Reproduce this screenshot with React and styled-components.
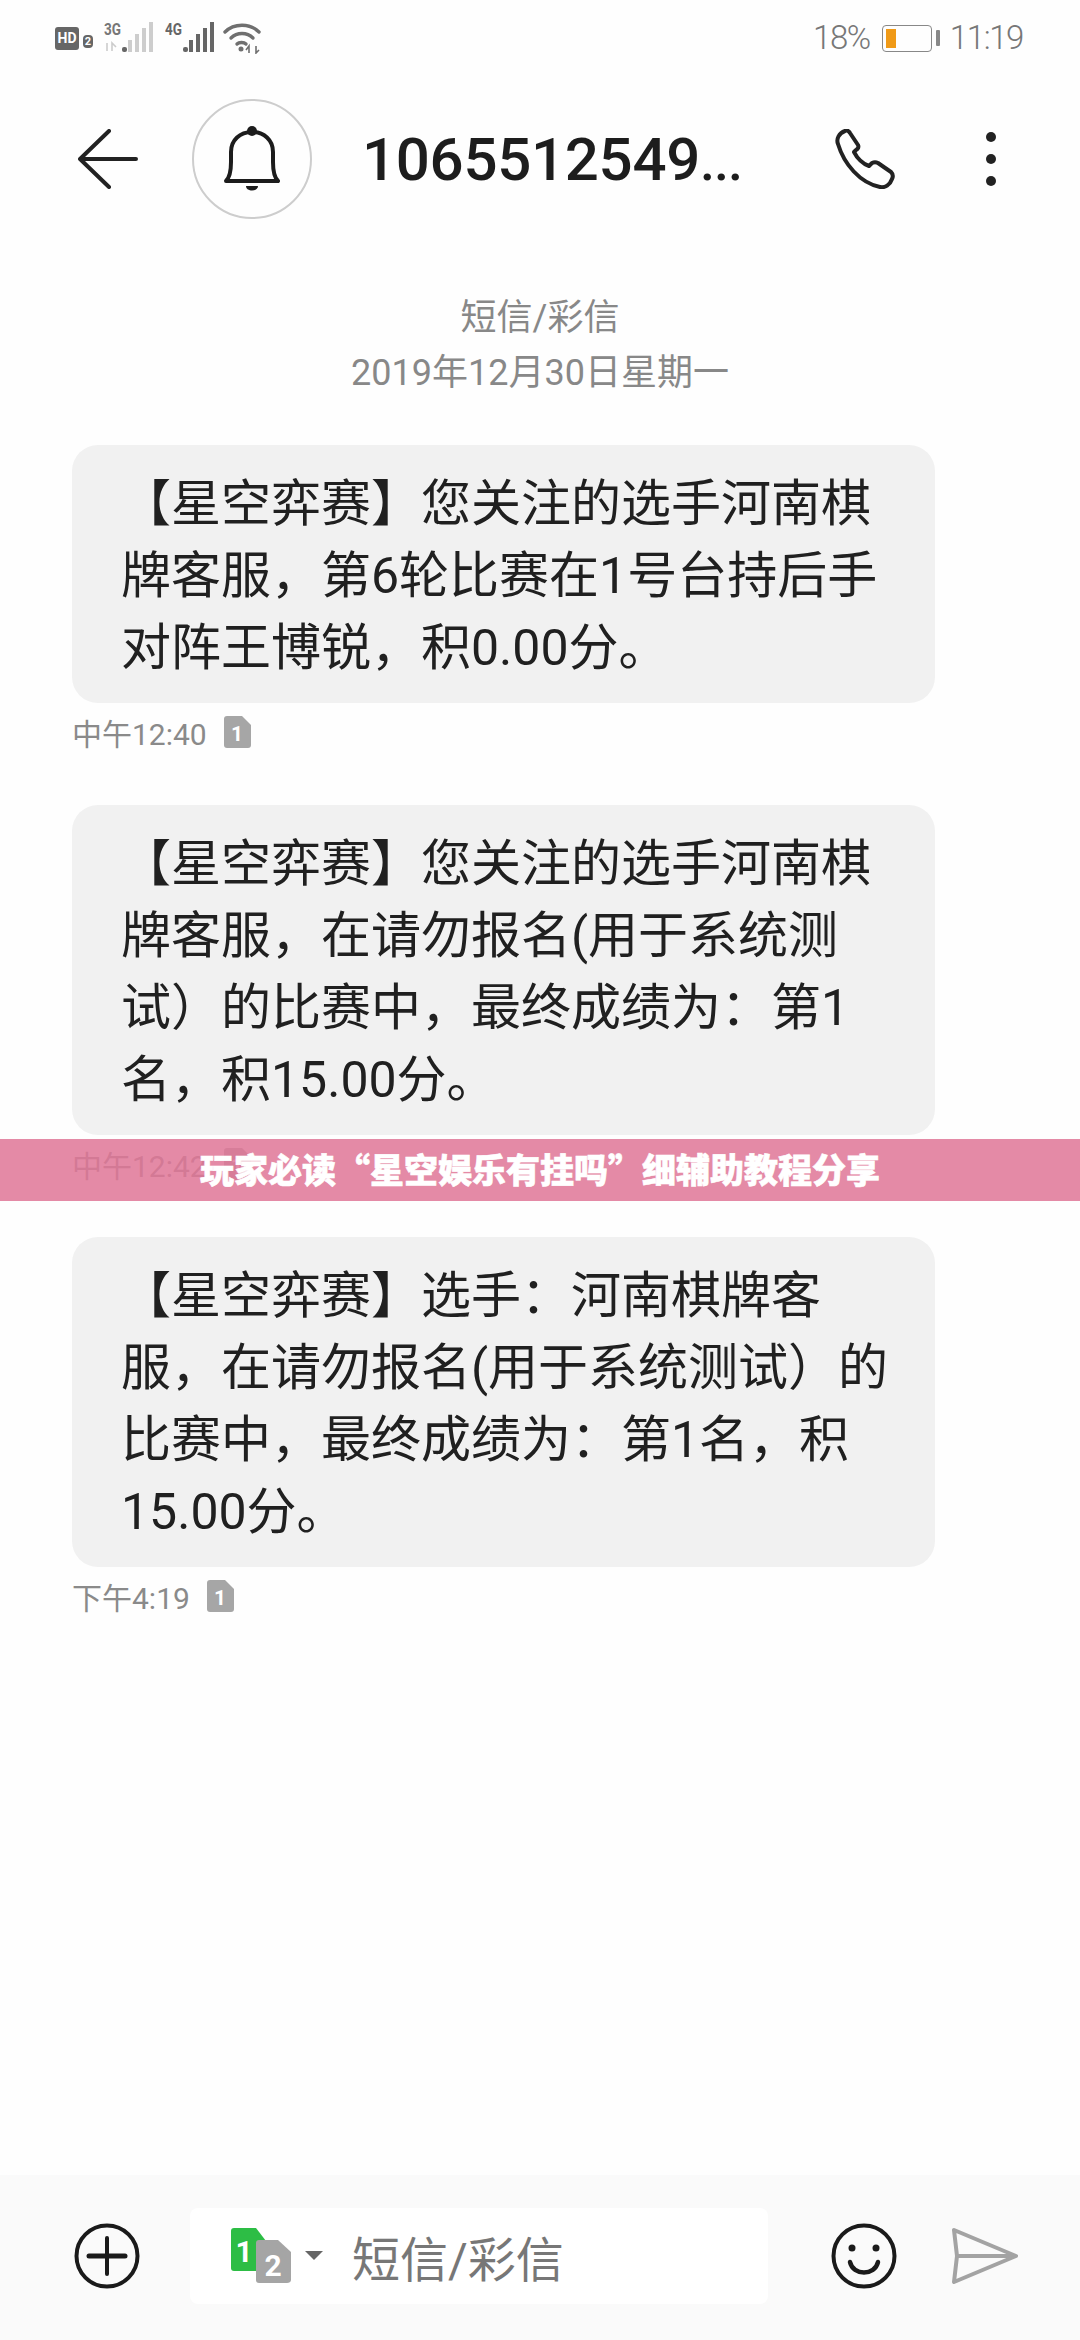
import React from "react";
import styled, { createGlobalStyle } from "styled-components";

const messages = [
  {
    lines: [
      "【星空弈赛】您关注的选手河南棋",
      "牌客服，第6轮比赛在1号台持后手",
      "对阵王博锐，积0.00分。",
    ],
    time: "中午12:40",
  },
  {
    lines: [
      "【星空弈赛】您关注的选手河南棋",
      "牌客服，在请勿报名(用于系统测",
      "试）的比赛中，最终成绩为：第1",
      "名，积15.00分。",
    ],
    time: "中午12:42",
  },
  {
    lines: [
      "【星空弈赛】选手：河南棋牌客",
      "服，在请勿报名(用于系统测试）的",
      "比赛中，最终成绩为：第1名，积",
      "15.00分。",
    ],
    time: "下午4:19",
  },
];

const Signal = ({ label, color, faint }) => (
  <svg width="50" height="38" viewBox="0 0 50 38">
    <text x="0" y="16" fontFamily="Roboto" fontWeight="700" fontSize="17" fill={faint ? "#777" : "#666"} textLength="17" lengthAdjust="spacingAndGlyphs">
      {label}
    </text>
    {faint && <path d="M3 24v8M8 32v-8l4 4" stroke="#ccc" strokeWidth="1.6" fill="none" />}
    <rect x="18" y="28" width="5" height="5" rx="2" fill="#666" />
    <rect x="24" y="21" width="4" height="12" fill={color} />
    <rect x="31" y="15" width="4" height="18" fill={color} />
    <rect x="38" y="9" width="4" height="24" fill={color} />
    <rect x="45" y="3" width="4" height="30" fill={color} />
  </svg>
);

const Wifi = () => (
  <svg width="38" height="32" viewBox="0 0 38 32" fill="none" stroke="#6f6f6f" strokeWidth="3.4" strokeLinecap="round">
    <path d="M2 10C11 1 27 1 36 10" />
    <path d="M8 16C14 10 24 10 30 16" />
    <path d="M14 22C16 20 21 20 23 22" />
    <circle cx="18" cy="27" r="2.5" fill="#6f6f6f" stroke="none" />
    <path d="M26 31v-7l-3 4M33 24v7l3-3" strokeWidth="1.6" strokeLinecap="butt" />
  </svg>
);

const BackIcon = () => (
  <svg width="60" height="60" viewBox="0 0 60 60" fill="none" stroke="#222" strokeWidth="4" strokeLinecap="round" strokeLinejoin="round">
    <path d="M31 2L2 30L31 58M2 30H58" />
  </svg>
);

const BellIcon = () => (
  <svg width="56" height="66" viewBox="0 0 56 66">
    <path
      d="M2 55C6 51 7 44 7 36V26C7 14 16 6 28 6C40 6 49 14 49 26V36C49 44 50 51 54 55Z"
      fill="none"
      stroke="#1c1c1c"
      strokeWidth="4"
      strokeLinejoin="round"
    />
    <circle cx="28" cy="5" r="5" fill="#1c1c1c" />
    <path d="M22 60H34C34 66 22 66 22 60Z" fill="#1c1c1c" />
  </svg>
);

const PhoneIcon = () => (
  <svg width="60" height="60" viewBox="0 0 60 60" fill="none" stroke="#222" strokeWidth="4" strokeLinejoin="round">
    <path d="M3 15C1 10 4 4 10 2C12 1 14 2 15 4L23 16C24 18 23 20 21 21L19 23C22 29 28 35 34 37L37 34C39 33 41 33 43 34L56 43C58 45 58 48 57 50C55 56 50 59 45 58C25 54 9 35 3 15Z" />
  </svg>
);

const PlusIcon = () => (
  <svg width="66" height="66" viewBox="0 0 66 66" fill="none" stroke="#1a1a1a" strokeWidth="4" strokeLinecap="round">
    <circle cx="33" cy="33" r="30.5" />
    <path d="M15 33H51" strokeWidth="5" />
    <path d="M33 15V51" />
  </svg>
);

const SmileIcon = () => (
  <svg width="66" height="66" viewBox="0 0 66 66" fill="none" stroke="#1a1a1a" strokeWidth="4" strokeLinecap="round">
    <circle cx="33" cy="33" r="30.5" />
    <circle cx="21" cy="25" r="3.5" fill="#1a1a1a" stroke="none" />
    <circle cx="45" cy="25" r="3.5" fill="#1a1a1a" stroke="none" />
    <path d="M19 39C22 53 44 53 47 39" strokeWidth="4.5" />
  </svg>
);

const SendIcon = () => (
  <svg width="66" height="56" viewBox="0 0 66 56" fill="none" stroke="#a3a3a3" strokeWidth="4" strokeLinejoin="round">
    <path d="M2 2L64 28L2 54L5 28Z" />
    <path d="M5 28H64" />
  </svg>
);

const SimBadge = ({ n }) => (
  <svg width="27" height="32" viewBox="0 0 27 32">
    <path d="M3 0H18L27 9V29C27 31 26 32 24 32H3C1 32 0 31 0 29V3C0 1 1 0 3 0Z" fill="#a6a6a6" />
    <text x="13" y="25" textAnchor="middle" fontFamily="Roboto" fontWeight="700" fontSize="21" fill="#fff">
      {n}
    </text>
  </svg>
);

const SimPicker = () => (
  <svg width="94" height="56" viewBox="0 0 94 56">
    <path d="M3 0H25L35 13V40C35 42 33 43 31 43H3C1 43 0 42 0 40V3C0 1 1 0 3 0Z" fill="#2dbd45" />
    <text x="13" y="34" textAnchor="middle" fontFamily="Roboto" fontWeight="700" fontSize="30" fill="#fff">
      1
    </text>
    <path d="M28 12H47L60 24V52C60 54 58 55 56 55H28C26 55 25 54 25 52V15C25 13 26 12 28 12Z" fill="#a5a5a5" />
    <text x="42" y="48" textAnchor="middle" fontFamily="Roboto" fontWeight="700" fontSize="30" fill="#fff">
      2
    </text>
    <path d="M74 23H92L83 32Z" fill="#666" />
  </svg>
);

const App = () => {
  return (
    <Screen>
      <GlobalStyle />
      <StatusBar>
        <StatusGroup>
          <HdBadge>HD</HdBadge>
          <HdSlot>2</HdSlot>
          <SignalSlot>
            <Signal label="3G" color="#cdcdcd" faint />
          </SignalSlot>
          <SignalSlot>
            <Signal label="4G" color="#666" />
          </SignalSlot>
          <WifiSlot>
            <Wifi />
          </WifiSlot>
        </StatusGroup>
        <StatusGroup>
          <StatusText>18%</StatusText>
          <Battery>
            <BatteryLevel />
          </Battery>
          <BatteryTip />
          <StatusText>11:19</StatusText>
        </StatusGroup>
      </StatusBar>

      <Header>
        <BackIcon />
        <Avatar>
          <BellIcon />
        </Avatar>
        <Title>
          1065512549<Ellipsis>...</Ellipsis>
        </Title>
        <PhoneSlot>
          <PhoneIcon />
        </PhoneSlot>
        <MoreButton>
          <Dot />
          <Dot />
          <Dot />
        </MoreButton>
      </Header>

      <Thread>
        <ThreadInfo>
          <div>短信/彩信</div>
          <div>2019年12月30日星期一</div>
        </ThreadInfo>
        {messages.map((message) => (
          <Message key={message.time}>
            <Bubble>
              {message.lines.map((line) => (
                <Line key={line}>{line}</Line>
              ))}
            </Bubble>
            <Meta>
              <span>{message.time}</span>
              <SimBadge n="1" />
            </Meta>
          </Message>
        ))}
      </Thread>

      <Composer>
        <PlusIcon />
        <InputBox>
          <SimPicker />
          <Placeholder>短信/彩信</Placeholder>
        </InputBox>
        <SmileSlot>
          <SmileIcon />
        </SmileSlot>
        <SendSlot>
          <SendIcon />
        </SendSlot>
      </Composer>

      <Banner>玩家必读“星空娱乐有挂吗”细辅助教程分享</Banner>
    </Screen>
  );
};

export default App;

const GlobalStyle = createGlobalStyle`
  html, body {
    margin: 0;
    padding: 0;
    background: #fff;
  }
`;

const Screen = styled.div`
  position: relative;
  width: 1080px;
  height: 2340px;
  display: flex;
  flex-direction: column;
  overflow: hidden;
  background: #fefefe;
  font-family: Roboto, "Noto Sans CJK SC", sans-serif;
`;

const StatusBar = styled.div`
  height: 76px;
  box-sizing: border-box;
  padding: 0 57px 0 55px;
  display: flex;
  justify-content: space-between;
  align-items: center;
`;

const StatusGroup = styled.div`
  display: flex;
  align-items: center;
`;

const HdBadge = styled.span`
  width: 24px;
  height: 23px;
  border-radius: 3px;
  background: #666;
  color: #fff;
  font-size: 14px;
  font-weight: 700;
  line-height: 23px;
  text-align: center;
`;

const HdSlot = styled.span`
  width: 10px;
  height: 13px;
  margin: 6px 0 0 4px;
  border-radius: 4px;
  background: #666;
  color: #fff;
  font-size: 11px;
  font-weight: 700;
  line-height: 13px;
  text-align: center;
`;

const SignalSlot = styled.span`
  display: flex;
  margin-left: 11px;
`;

const WifiSlot = styled.span`
  display: flex;
  margin-left: 8px;
`;

const StatusText = styled.span`
  color: #777;
  font-size: 33px;
  font-weight: 300;
  letter-spacing: -1.4px;
  line-height: 38px;
`;

const Battery = styled.div`
  flex-shrink: 0;
  width: 50px;
  height: 27px;
  margin-left: 12px;
  padding: 3px;
  box-sizing: border-box;
  border: 1.5px solid #888;
  border-radius: 4px;
`;

const BatteryLevel = styled.div`
  width: 10px;
  height: 100%;
  background: #f09a17;
`;

const BatteryTip = styled.div`
  flex-shrink: 0;
  width: 4px;
  height: 16px;
  margin: 0 10px 0 4px;
  background: #888;
  border-radius: 1px;
`;

const Header = styled.div`
  height: 166px;
  box-sizing: border-box;
  padding-left: 78px;
  display: flex;
  align-items: center;
`;

const Avatar = styled.div`
  width: 120px;
  height: 120px;
  margin-left: 54px;
  box-sizing: border-box;
  border: 2.5px solid #cdcdcd;
  border-radius: 50%;
  display: flex;
  align-items: center;
  justify-content: center;
`;

const Title = styled.div`
  width: 375px;
  margin-left: 50px;
  color: #1d1d1d;
  font-size: 60px;
  font-weight: 500;
  letter-spacing: -0.3px;
  white-space: nowrap;
`;

const Ellipsis = styled.span`
  font-size: 54px;
  letter-spacing: -1px;
`;

const PhoneSlot = styled.div`
  margin-left: 98px;
  display: flex;
`;

const MoreButton = styled.div`
  margin-left: 91px;
  display: flex;
  flex-direction: column;
  gap: 12px;
`;

const Dot = styled.span`
  width: 10px;
  height: 10px;
  border-radius: 50%;
  background: #222;
`;

const Thread = styled.div`
  flex: 1;
  padding: 49px 145px 0 72px;
`;

const ThreadInfo = styled.div`
  margin: 0 -73px 44px 0;
  color: #888;
  font-size: 36px;
  line-height: 55px;
  text-align: center;
`;

const Message = styled.div`
  margin-bottom: 52px;
`;

const Bubble = styled.div`
  padding: 23px 0 19px 49px;
  background: #f1f1f1;
  border-radius: 26px;
  color: #202020;
  font-size: 50px;
  line-height: 72px;
`;

const Line = styled.div`
  white-space: nowrap;
`;

const Meta = styled.div`
  height: 42px;
  margin-top: 8px;
  display: flex;
  align-items: center;
  gap: 17px;
  color: #8a8a8a;
  font-size: 30px;
`;

const Composer = styled.div`
  height: 165px;
  box-sizing: border-box;
  padding: 0 0 3px 74px;
  display: flex;
  align-items: center;
  background: #fafafa;
`;

const InputBox = styled.div`
  width: 578px;
  height: 96px;
  margin-left: 50px;
  box-sizing: border-box;
  padding: 0 0 0 41px;
  display: flex;
  align-items: center;
  gap: 27px;
  background: #fff;
  border-radius: 8px;
`;

const Placeholder = styled.span`
  color: #777;
  font-size: 48px;
`;

const SmileSlot = styled.div`
  margin-left: 63px;
  display: flex;
`;

const SendSlot = styled.div`
  margin-left: 55px;
  display: flex;
`;

const Banner = styled.div`
  position: absolute;
  top: 1139px;
  left: 0;
  right: 0;
  height: 62px;
  background: rgba(223, 117, 150, 0.85);
  color: #fff;
  font-family: "Noto Sans CJK SC", sans-serif;
  font-size: 34px;
  font-weight: 900;
  -webkit-text-stroke: 0.6px #fff;
  line-height: 60px;
  text-align: center;
  white-space: nowrap;
`;
